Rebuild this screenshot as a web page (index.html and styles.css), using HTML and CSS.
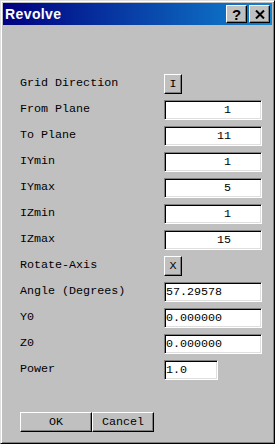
FILE: index.html
```html
<!DOCTYPE html>
<html>

<head>
    <title>Revolve</title>
    <link rel="stylesheet" href="styles.css">
</head>

<body>
    <div class="window">
        <div class="titlebar">
            <span class="title">Revolve</span>
            <div class="title-buttons">
                <button class="tbtn help">?</button>
                <button class="tbtn close">
                    <svg width="10" height="9" viewBox="0 0 10 9">
                        <path d="M1 0.5 L9 8.5 M9 0.5 L1 8.5" stroke="#000" stroke-width="2" fill="none"/>
                    </svg>
                </button>
            </div>
        </div>

        <div class="content">
            <div class="form">
                <label>Grid Direction</label>
                <button class="pick">I</button>

                <label>From Plane</label>
                <input class="field num" type="text" value="1">

                <label>To Plane</label>
                <input class="field num" type="text" value="11">

                <label>IYmin</label>
                <input class="field num" type="text" value="1">

                <label>IYmax</label>
                <input class="field num" type="text" value="5">

                <label>IZmin</label>
                <input class="field num" type="text" value="1">

                <label>IZmax</label>
                <input class="field num" type="text" value="15">

                <label>Rotate-Axis</label>
                <button class="pick">X</button>

                <label>Angle (Degrees)</label>
                <input class="field" type="text" value="57.29578">

                <label>Y0</label>
                <input class="field" type="text" value="0.000000">

                <label>Z0</label>
                <input class="field" type="text" value="0.000000">

                <label>Power</label>
                <input class="field short" type="text" value="1.0">
            </div>

            <div class="actions">
                <button class="btn ok">OK</button>
                <button class="btn cancel">Cancel</button>
            </div>
        </div>
    </div>
</body>

</html>
```

FILE: styles.css
```css
body {
    margin: 0;
    font-family: "Liberation Mono", "Courier New", monospace;
}

.window {
    width: 275px;
    height: 444px;
    box-sizing: border-box;
    background-color: #c0c0c0;
    border: 1px solid;
    border-color: #dfdfdf #000 #000 #dfdfdf;
    box-shadow: inset 1px 1px #fff, inset -1px -1px #808080;
    padding: 2px;
}

.titlebar {
    height: 22px;
    display: flex;
    align-items: center;
    justify-content: space-between;
    padding: 0 2px 0 2px;
    background: linear-gradient(to right, #000080, #1084d0);
}

.title {
    color: white;
    font-family: "Liberation Sans", Arial, sans-serif;
    font-weight: bold;
    font-size: 14px;
    letter-spacing: 0.4px;
}

.title-buttons {
    display: flex;
    gap: 2px;
}

.tbtn {
    width: 21px;
    height: 18px;
    padding: 0;
    margin: 0;
    display: flex;
    align-items: center;
    justify-content: center;
    background-color: #c0c0c0;
    border: 1px solid;
    border-color: #fff #000 #000 #fff;
    box-shadow: inset -1px -1px #808080;
    font-family: "Liberation Sans", Arial, sans-serif;
    font-weight: bold;
    font-size: 15px;
    color: #000;
}

.content {
    padding: 49px 0 0 17px;
}

.form {
    display: grid;
    grid-template-columns: 144px auto;
    grid-auto-rows: 20px;
    row-gap: 6px;
    justify-items: start;
}

.form label {
    font-size: 11.7px;
    line-height: 14px;
    padding-top: 2px;
    color: #000;
}

.pick {
    width: 18px;
    height: 20px;
    padding: 0;
    margin: 0;
    background-color: #c0c0c0;
    border: 1px solid;
    border-color: #fff #000 #000 #fff;
    box-shadow: inset -1px -1px #808080;
    font-family: "Liberation Mono", "Courier New", monospace;
    font-size: 11.7px;
    color: #000;
}

.field {
    width: 98px;
    height: 20px;
    box-sizing: border-box;
    margin: 0;
    padding: 0 0 0 1px;
    background-color: #fff;
    border: 1px solid;
    border-color: #808080 #fff #fff #808080;
    box-shadow: inset 1px 1px #000, inset -1px -1px #dfdfdf;
    font-family: "Liberation Mono", "Courier New", monospace;
    font-size: 11.7px;
    color: #000;
    outline: none;
}

.field.num {
    text-align: right;
    padding: 0 30px 0 0;
}

.field.short {
    width: 54px;
}

.actions {
    display: flex;
    margin-top: 32px;
    padding-left: 0;
}

.btn {
    height: 20px;
    padding: 0;
    margin: 0;
    background-color: #c0c0c0;
    border: 1px solid;
    border-color: #fff #000 #000 #fff;
    box-shadow: inset -1px -1px #808080;
    font-family: "Liberation Mono", "Courier New", monospace;
    font-size: 11.7px;
    color: #000;
}

.btn.ok {
    width: 72px;
}

.btn.cancel {
    width: 62px;
}
```
